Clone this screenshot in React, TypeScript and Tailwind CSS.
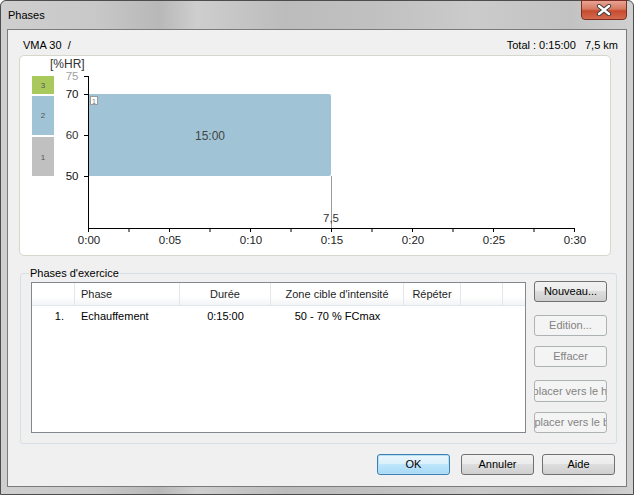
import React from "react";

type BtnKind = "normal" | "default" | "disabled";

const btnStyles: Record<BtnKind, string> = {
  normal:
    "border-[#707070] text-black bg-[linear-gradient(to_bottom,#f2f2f2_0%,#ebebeb_50%,#dddddd_50%,#cfcfcf_100%)]",
  default:
    "border-[#3c7fb1] text-black bg-[linear-gradient(to_bottom,#eaf6fd_0%,#d9f0fc_50%,#bee6fd_50%,#a7d9f5_100%)] shadow-[inset_0_0_0_1px_#b7e0f6]",
  disabled: "border-[#adb2b5] text-[#838383] bg-[#f4f4f4]",
};

const Btn: React.FC<{ label: string; kind?: BtnKind; className?: string }> = ({
  label,
  kind = "normal",
  className = "",
}) => (
  <div
    className={`h-[21px] w-[73px] shrink-0 rounded-[3px] border flex items-center justify-center overflow-hidden whitespace-nowrap text-[11px] leading-none ${btnStyles[kind]} ${className}`}
  >
    <span className="shrink-0">{label}</span>
  </div>
);

const xTicks = [0, 1, 2, 3, 4, 5, 6, 7, 8, 9, 10, 11, 12];
const xLabels = ["0:00", "0:05", "0:10", "0:15", "0:20", "0:25", "0:30"];

const Chart: React.FC = () => (
  <svg width="590" height="199" viewBox="20 56 590 199" className="block">
    <g fontFamily="'Liberation Sans', Arial, sans-serif">
      <text x="50" y="67.5" fontSize="12" fill="#333">
        [%HR]
      </text>

      {/* zones */}
      <rect x="32" y="76" width="22" height="18" fill="#a9c95c" />
      <text x="43" y="88" fontSize="8" fill="#555" textAnchor="middle">3</text>
      <rect x="32" y="96" width="22" height="39" fill="#a0c4d6" />
      <text x="43" y="118" fontSize="8" fill="#555" textAnchor="middle">2</text>
      <rect x="32" y="137" width="22" height="39" fill="#c0c0c0" />
      <text x="43" y="160" fontSize="8" fill="#555" textAnchor="middle">1</text>

      {/* y labels */}
      <text x="78.5" y="80" fontSize="11.5" fill="#a0a0a0" textAnchor="end">75</text>
      <text x="78.5" y="98" fontSize="11.5" fill="#111" textAnchor="end">70</text>
      <text x="78.5" y="139" fontSize="11.5" fill="#333" textAnchor="end">60</text>
      <text x="78.5" y="180" fontSize="11.5" fill="#111" textAnchor="end">50</text>

      {/* block */}
      <path d="M89 94 H329 Q331 94 331 96 V174 Q331 176 329 176 H89 Z" fill="#a0c4d6" />
      <text x="210" y="140" fontSize="12" fill="#444" textAnchor="middle">15:00</text>
      <rect x="90.5" y="96.5" width="7" height="8" fill="#fff" stroke="#9a9a9a" />
      <text x="94" y="103.5" fontSize="7" fill="#777" textAnchor="middle">1</text>

      {/* distance marker */}
      <line x1="331.5" y1="176" x2="331.5" y2="228" stroke="#9a9a9a" />
      <text x="331" y="222" fontSize="11.5" fill="#333" textAnchor="middle">7,5</text>

      {/* axes */}
      <line x1="88.5" y1="76" x2="88.5" y2="228.5" stroke="#000" />
      {[76, 94, 135, 176].map((y) => (
        <line key={y} x1="84" y1={y + 0.5} x2="88" y2={y + 0.5} stroke="#000" />
      ))}
      <line x1="88" y1="228.5" x2="575" y2="228.5" stroke="#000" />
      {xTicks.map((i) => (
        <line
          key={i}
          x1={88.5 + i * 40.5}
          y1="228"
          x2={88.5 + i * 40.5}
          y2="232"
          stroke="#000"
        />
      ))}
      {xLabels.map((l, i) => (
        <text key={l} x={89 + i * 81} y="244" fontSize="11.5" fill="#222" textAnchor="middle">
          {l}
        </text>
      ))}
    </g>
  </svg>
);

const App: React.FC = () => (
  <div className="w-[634px] h-[495px] overflow-hidden font-['Liberation_Sans',Arial,sans-serif] text-black">
    <div className="w-[634px] h-[495px] border border-[#4d4d4d] rounded-t-[6px] bg-[#c3c3c3] bg-[linear-gradient(to_right,#cfcfcf_0%,#c8c8c8_15%,#b8b8b8_25%,#cecece_31%,#bcbcbc_45%,#c1c1c1_60%,#cbcbcb_75%,#c2c2c2_90%,#d0d0d0_100%)] flex flex-col">
      {/* title bar */}
      <div className="h-[28px] flex justify-between shrink-0">
        <div className="pl-[7px] pt-[8px] text-[11px] leading-[13px] text-black">Phases</div>
        <div className="-mt-px mr-[6px] w-[46px] h-[20px] rounded-b-[4px] border border-[#7b2e21] bg-[linear-gradient(to_bottom,#e8a493_0%,#d67860_45%,#c74a2f_55%,#d46a4f_100%)] flex items-center justify-center">
          <svg width="16" height="12" viewBox="0 0 16 12">
            <path d="M3 2 L13 10 M13 2 L3 10" stroke="#3b3b3b" strokeWidth="4.2" strokeLinecap="round" />
            <path d="M3 2 L13 10 M13 2 L3 10" stroke="#fff" strokeWidth="2.4" strokeLinecap="round" />
          </svg>
        </div>
      </div>

      {/* client area */}
      <div className="mx-[6px] mb-[7px] flex-1 border border-[#7b7b7b] bg-[#f0f0f0] flex flex-col">
        <div className="mt-[8px] h-[14px] flex justify-between pl-[15px] pr-[8px] text-[11px] leading-[14px]">
          <span className="whitespace-pre">VMA 30  /</span>
          <span className="whitespace-pre">Total : 0:15:00   7,5 km</span>
        </div>

        <div className="mt-[3px] ml-[11px] w-[592px] h-[201px] border border-[#d6d6cb] rounded-[5px] bg-white overflow-hidden">
          <Chart />
        </div>

        {/* group box */}
        <div className="relative mt-[17px] ml-[12px] w-[597px] h-[171px] border border-[#d5dfe5] rounded-[3px] flex pl-[10px] pt-[8px]">
          <div className="absolute -top-[8px] left-[8px] px-[1px] bg-[#f0f0f0] text-[11px] leading-[14px]">
            Phases d'exercice
          </div>

          {/* list view */}
          <div className="w-[495px] h-[151px] border border-[#828790] bg-white flex flex-col text-[11px]">
            <div className="h-[23px] flex bg-[linear-gradient(to_bottom,#ffffff_0%,#ffffff_60%,#f3f4f6_100%)] border-b border-[#e3e6ea] leading-[23px] text-[#1e1e1e]">
              <div className="w-[43px] border-r border-[#e3e6ea]" />
              <div className="w-[105px] pl-[6px] border-r border-[#e3e6ea]">Phase</div>
              <div className="w-[91px] text-center border-r border-[#e3e6ea]">Durée</div>
              <div className="w-[133px] text-center border-r border-[#e3e6ea]">Zone cible d'intensité</div>
              <div className="w-[57px] text-center border-r border-[#e3e6ea]">Répéter</div>
              <div className="w-[42px] border-r border-[#e3e6ea]" />
              <div className="flex-1" />
            </div>
            <div className="h-[19px] mt-[1px] flex leading-[19px]">
              <div className="w-[43px] text-right pr-[11px]">1.</div>
              <div className="w-[105px] pl-[6px]">Echauffement</div>
              <div className="w-[91px] text-center">0:15:00</div>
              <div className="w-[133px] text-center whitespace-nowrap">50 - 70 % FCmax</div>
            </div>
          </div>

          {/* right buttons */}
          <div className="ml-[8px] -mt-px flex flex-col">
            <Btn label="Nouveau..." />
            <Btn label="Edition..." kind="disabled" className="mt-[13px]" />
            <Btn label="Effacer" kind="disabled" className="mt-[10px]" />
            <Btn label="Déplacer vers le haut" kind="disabled" className="mt-[13px] h-[22px]" />
            <Btn label="Déplacer vers le bas" kind="disabled" className="mt-[10px]" />
          </div>
        </div>

        {/* bottom buttons */}
        <div className="mt-[10px] flex justify-end pr-[11px]">
          <Btn label="OK" kind="default" />
          <Btn label="Annuler" className="ml-[11px]" />
          <Btn label="Aide" className="ml-[8px]" />
        </div>
      </div>
    </div>
  </div>
);

export default App;
